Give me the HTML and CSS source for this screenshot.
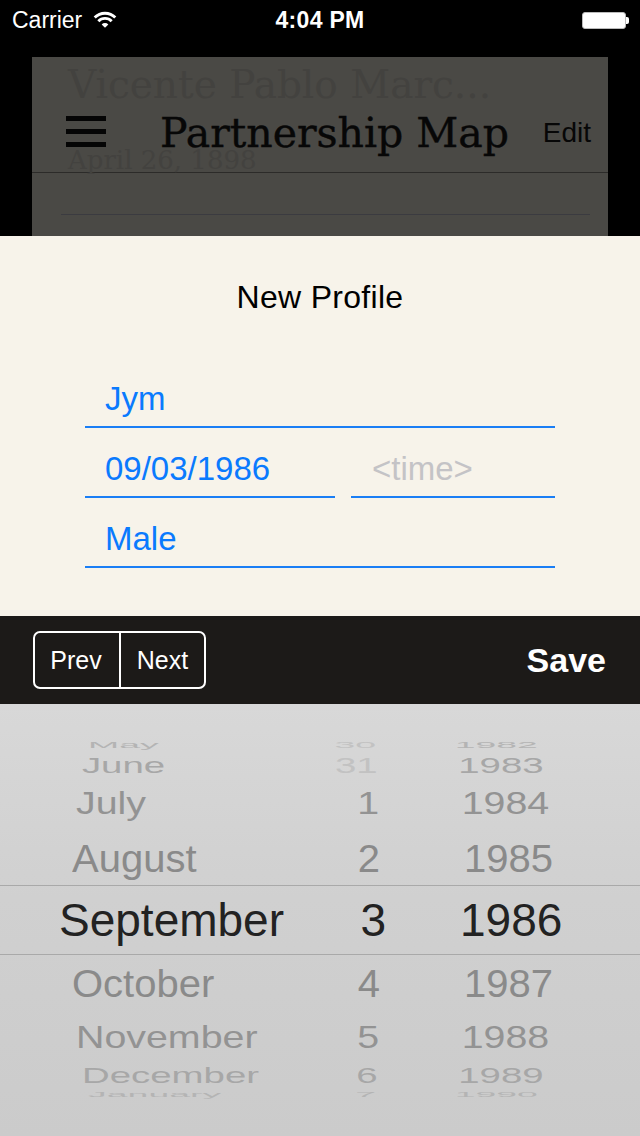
FILE: index.html
```html
<!DOCTYPE html>
<html>
  <head>
    <meta charset="utf-8" />
    <title>New Profile</title>
    <link rel="stylesheet" href="styles.css">
  </head>

  <body>
    <div class="status">
      <div class="status-left">
        <span>Carrier</span>
        <svg class="wifi" width="26" height="17" viewBox="0 0 25 16">
          <path d="M2.6 6.1 A14 14 0 0 1 22.4 6.1" fill="none" stroke="#fff" stroke-width="2.8" />
          <path d="M6.1 9.6 A9 9 0 0 1 18.9 9.6" fill="none" stroke="#fff" stroke-width="2.8" />
          <path d="M12.5 16 L9.3 12.8 A4.5 4.5 0 0 1 15.7 12.8 Z" fill="#fff" />
        </svg>
      </div>
      <div class="status-time">4:04 PM</div>
      <div class="status-right">
        <div class="battery"></div>
        <div class="battery-nub"></div>
      </div>
    </div>

    <div class="backdrop">
      <div class="card">
        <div class="cell first">
          <div class="cell-name">Vicente Pablo Marc...</div>
          <div class="cell-date">April 26, 1898</div>
        </div>
        <div class="cell second"></div>

        <div class="navbar">
          <div class="burger"><span></span><span></span><span></span></div>
          <div class="nav-title">Partnership Map</div>
          <div class="nav-edit">Edit</div>
        </div>
      </div>
    </div>

    <div class="sheet">
      <div class="sheet-title">New Profile</div>
      <div class="fields">
        <div class="field">Jym</div>
        <div class="field-pair">
          <div class="field">09/03/1986</div>
          <div class="field placeholder">&lt;time&gt;</div>
        </div>
        <div class="field">Male</div>
      </div>
    </div>

    <div class="toolbar">
      <div class="segmented">
        <div class="seg prev">Prev</div>
        <div class="seg next">Next</div>
      </div>
      <div class="save">Save</div>
    </div>

    <div class="wheel">
      <div class="wheel-row r-may"><span class="m">May</span><span class="d off">30</span><span class="y">1982</span></div>
      <div class="wheel-row r-june"><span class="m">June</span><span class="d off">31</span><span class="y">1983</span></div>
      <div class="wheel-row r-july"><span class="m">July</span><span class="d">1</span><span class="y">1984</span></div>
      <div class="wheel-row r-aug"><span class="m">August</span><span class="d">2</span><span class="y">1985</span></div>
      <div class="wheel-row r-sel"><span class="m">September</span><span class="d">3</span><span class="y">1986</span></div>
      <div class="wheel-row r-oct"><span class="m">October</span><span class="d">4</span><span class="y">1987</span></div>
      <div class="wheel-row r-nov"><span class="m">November</span><span class="d">5</span><span class="y">1988</span></div>
      <div class="wheel-row r-dec"><span class="m">December</span><span class="d">6</span><span class="y">1989</span></div>
      <div class="wheel-row r-jan"><span class="m">January</span><span class="d">7</span><span class="y">1990</span></div>
    </div>
  </body>
</html>
```

FILE: styles.css
```css
body {
  margin: 0;
  width: 640px;
  height: 1136px;
  overflow: hidden;
  background: #000;
  font-family: "Liberation Sans", Arial, sans-serif;
}

/* status bar */
.status {
  height: 40px;
  display: grid;
  grid-template-columns: 1fr auto 1fr;
  align-items: center;
  color: #fff;
  font-size: 23px;
}
.status-left {
  display: flex;
  align-items: center;
  padding-left: 12px;
  padding-top: 1px;
}
.wifi {
  margin-left: 10px;
  margin-top: -2px;
}
.status-time {
  font-weight: bold;
  padding-top: 1px;
  letter-spacing: 0.3px;
}
.status-right {
  display: flex;
  align-items: center;
  justify-content: flex-end;
  padding-right: 11px;
}
.battery {
  width: 42px;
  height: 15px;
  background: #fff;
  border: 1px solid #bbb;
  border-radius: 3px;
}
.battery-nub {
  width: 3px;
  height: 7px;
  background: #fff;
  border-radius: 0 2px 2px 0;
}

/* dimmed screen behind the sheet */
.backdrop {
  height: 196px;
  padding-top: 17px;
  box-sizing: border-box;
  background: #000;
}
.card {
  position: relative;
  margin: 0 32px;
  height: 179px;
  overflow: hidden;
  background: #4a4945;
}
.cell.first {
  padding: 4px 0 0 36px;
  border-bottom: 1px solid #2c2b29;
}
.cell-name {
  font-family: "DejaVu Serif", serif;
  font-size: 39px;
  line-height: 48px;
  color: #43423f;
  white-space: nowrap;
}
.cell-date {
  margin-top: 40px;
  font-family: "DejaVu Serif", serif;
  font-size: 26px;
  line-height: 23px;
  color: #43423f;
}
.cell.second {
  margin: 0 18px 0 29px;
  height: 41px;
  border-bottom: 1px solid #3b3b40;
}
.navbar {
  position: absolute;
  left: 0;
  right: 0;
  top: 46px;
  height: 56px;
  display: flex;
  align-items: center;
  padding: 0 17px 0 34px;
  color: #070707;
}
.burger {
  display: flex;
  flex-direction: column;
  gap: 8px;
  margin-right: 54px;
}
.burger span {
  width: 40px;
  height: 5px;
  background: #050505;
}
.nav-title {
  flex: 1;
  font-family: "DejaVu Serif", serif;
  font-size: 41px;
  line-height: 40px;
  padding-top: 4px;
  white-space: nowrap;
  -webkit-text-stroke: 0.4px #070707;
}
.nav-edit {
  font-size: 28px;
  line-height: 28px;
  padding-top: 4px;
}

/* new profile sheet */
.sheet {
  background: #f7f3ea;
  padding: 41px 85px 48px;
}
.sheet-title {
  text-align: center;
  font-size: 32px;
  line-height: 40px;
  letter-spacing: 0.3px;
  color: #000;
  margin-bottom: 41px;
}
.field {
  display: flex;
  align-items: flex-end;
  padding: 0 0 7px 20px;
  box-sizing: border-box;
  height: 70px;
  border-bottom: 2px solid #1a7ef5;
  font-size: 33px;
  line-height: 40px;
  color: #0a7afe;
}
.field-pair {
  display: grid;
  grid-template-columns: 250px 1fr;
  gap: 16px;
}
.field.placeholder {
  color: #c4c3c6;
  padding-left: 21px;
}

/* keyboard toolbar */
.toolbar {
  height: 88px;
  background: #1c1a18;
  display: flex;
  align-items: center;
  justify-content: space-between;
  padding: 0 34px 0 33px;
}
.segmented {
  display: flex;
  height: 54px;
  border: 2px solid #fff;
  border-radius: 7px;
  color: #fff;
  font-size: 25px;
}
.seg {
  display: flex;
  align-items: center;
  justify-content: center;
}
.seg.prev {
  width: 82px;
  padding-right: 2px;
}
.seg.next {
  width: 83px;
  border-left: 2px solid #fff;
}
.save {
  color: #fff;
  font-size: 34px;
  font-weight: bold;
}

/* date wheel */
.wheel {
  height: 432px;
  padding-top: 31px;
  box-sizing: border-box;
  background: linear-gradient(180deg, #d8d8d8 0%, #d0d0d0 45%, #cbcbcb 100%);
}
.wheel-row {
  display: grid;
  grid-template-columns: 300px 80px 1fr;
  font-size: 40px;
  white-space: nowrap;
  color: #8a8a8a;
  transform-origin: 320px 50%;
}
.wheel-row .m {
  padding-left: 72px;
}
.wheel-row .d {
  text-align: right;
}
.wheel-row .y {
  padding-left: 84px;
}
.r-may, .r-jan {
  color: #b4b4b4;
}
.r-may {
  height: 20px;
  line-height: 20px;
  transform: scale(0.935, 0.22);
}
.r-june {
  height: 20px;
  line-height: 20px;
  color: #a7a7a7;
  transform: scale(0.96, 0.55);
}
.r-july {
  height: 57px;
  line-height: 57px;
  color: #939393;
  transform: scale(0.984, 0.8);
}
.r-aug {
  height: 53px;
  line-height: 53px;
  transform: scaleY(0.97);
}
.r-sel {
  height: 68px;
  line-height: 68px;
  border-top: 1px solid #a9a9a9;
  border-bottom: 1px solid #a9a9a9;
  grid-template-columns: 300px 86px 1fr;
  font-size: 46px;
  color: #222;
}
.r-sel .m {
  padding-left: 59px;
}
.r-sel .y {
  padding-left: 74px;
}
.r-oct {
  height: 56px;
  line-height: 56px;
  transform: scaleY(0.97);
}
.r-nov {
  height: 52px;
  line-height: 52px;
  color: #939393;
  transform: scale(0.984, 0.8);
}
.r-dec {
  height: 26px;
  line-height: 26px;
  color: #a7a7a7;
  transform: scale(0.96, 0.53);
}
.r-jan {
  height: 10px;
  line-height: 10px;
  transform: scale(0.935, 0.2);
}
.wheel-row .d.off {
  color: #c2c2c2;
}
```
